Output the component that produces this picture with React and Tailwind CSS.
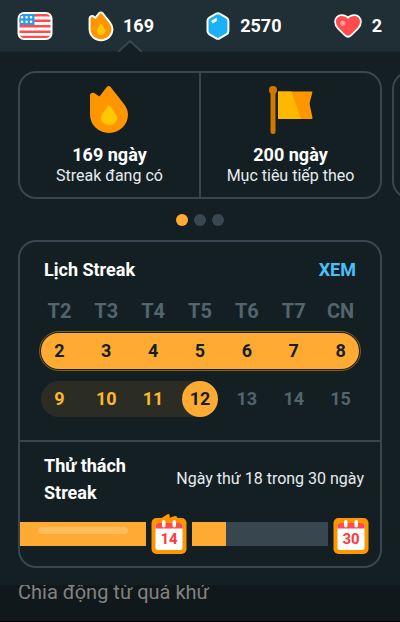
const weekdays = ["T2", "T3", "T4", "T5", "T6", "T7", "CN"];
const fullWeek = [2, 3, 4, 5, 6, 7, 8];
const currentWeek = [9, 10, 11, 12, 13, 14, 15];
const today = 12;

function UsFlag() {
  return (
    <svg className="block h-7 w-9" viewBox="0 0 36 28" role="img" aria-label="English">
      <defs>
        <clipPath id="flag">
          <rect x="2.5" y="2" width="31" height="24" rx="4.5" />
        </clipPath>
      </defs>
      <rect x="0.5" y="0" width="35" height="28" rx="6.5" fill="#fff" />
      <g clipPath="url(#flag)">
        <rect width="36" height="28" fill="#fff" />
        <path d="M0 3.3h36M0 8.7h36M0 14.2h36M0 19.7h36M0 25h36" stroke="#ff4b4b" strokeWidth="2.6" />
        <rect width="17.5" height="13" fill="#2e9be6" />
        <path
          d="M5 5.2h.1M9.5 5.2h.1M14 5.2h.1M5 9.8h.1M9.5 9.8h.1M14 9.8h.1"
          stroke="#fff"
          strokeWidth="2.5"
          strokeLinecap="round"
        />
      </g>
    </svg>
  );
}

function FlameShape({ outlined }) {
  return (
    <>
      <path
        d="M16.8 1c1-1.300 2.800-1.300 3.800 0L33 16.700c3 3.800 5 7.600 5 11.900C38 39 29.600 47 19 47S0 39 0 28.600V9.500C0 7 2 6.200 4.200 7l5.200 3.400z"
        fill="#ff9600"
        stroke={outlined ? "#fff" : "none"}
        strokeWidth="7"
        strokeLinejoin="round"
        paintOrder="stroke"
      />
      <path
        d="M17.600 20.500c.8-1.200 2-1.200 2.800 0l4.600 6.400c1.400 2 2 3.400 2 5.200 0 4-3.600 7-8 7s-8-3-8-7c0-1.800.6-3.200 2-5.200z"
        fill="#ffc800"
      />
    </>
  );
}

function Gem() {
  return (
    <svg className="block h-7 w-6" viewBox="0 0 24 28" aria-hidden="true">
      <path
        d="M10.300 2.700a3 3 0 0 1 3.200 0l6.400 3.700a3 3 0 0 1 1.500 2.600v10a3 3 0 0 1-1.500 2.600l-6.400 3.700a3 3 0 0 1-3.200 0l-6.400-3.700A3 3 0 0 1 2.500 19V9a3 3 0 0 1 1.400-2.600z"
        fill="#1cb0f6"
        stroke="#fff"
        strokeWidth="4"
        paintOrder="stroke"
      />
      <path d="M5 9l5.800-3.500v3.200a1 1 0 0 1-.5.900L6.500 11.500z" fill="#fff" opacity=".9" />
    </svg>
  );
}

function Heart() {
  return (
    <svg className="block h-6 w-7" viewBox="0 0 28 24" aria-hidden="true">
      <path
        d="M14 5C12.200 2.700 9.800 2 7.600 2 4.300 2 2 4.500 2 7.700c0 2.600 1.200 4.600 3 6.500l6.600 6.500c1.600 1.500 3.200 1.500 4.800 0l6.600-6.500c1.800-1.900 3-3.900 3-6.500C26 4.500 23.700 2 20.400 2 18.200 2 15.800 2.700 14 5z"
        fill="#ff4b4b"
        stroke="#fff"
        strokeWidth="3.600"
        paintOrder="stroke"
      />
      <circle cx="8.800" cy="9.300" r="2.600" fill="#ff9c9c" />
    </svg>
  );
}

function MilestoneFlag() {
  return (
    <svg className="block h-12 w-12" viewBox="0 0 48 48" aria-hidden="true">
      <path d="M11 5.500h33.500q1.200 0 .8 1.200l-2.500 9.300q-.3 1.500 0 3l2.700 12.800q.3 1.200-1 1.200H11z" fill="#ff9600" />
      <path d="M11 5.500h13.500L34 33H11z" fill="#ffb800" />
      <rect x="3.500" y="3" width="5" height="45" rx="2.500" fill="#d07900" />
      <circle cx="6" cy="4" r="4" fill="#d07900" />
    </svg>
  );
}

function CalendarBadge({ day, flaming }) {
  return (
    <svg className="block h-10 w-9 shrink-0" viewBox="0 0 36 40" role="img" aria-label={`Ngày ${day}`}>
      {flaming && <path d="M9 5l7-4.600q2.500-1 2.600 1l.2 2.400 5-1.800q2.500-.4 2.700 2V6H9z" fill="#ff9600" />}
      <rect x="0.500" y="4" width="35" height="36" rx="5" fill="#ff9600" />
      <rect x="4.500" y="9" width="27" height="27" rx="2.500" fill="#fff" />
      <path d="M4.500 14.500v-3a2.500 2.500 0 0 1 2.500-2.500h22a2.500 2.500 0 0 1 2.500 2.500v3z" fill="#ff4b4b" />
      <rect x="11" y="6" width="3.500" height="7.500" rx="1.750" fill="#fff" />
      <rect x="21.500" y="6" width="3.500" height="7.500" rx="1.750" fill="#fff" />
      <text x="18" y="30" textAnchor="middle" fontSize="15" fontWeight="700" fill="#ff3a3a">
        {day}
      </text>
    </svg>
  );
}

function Header() {
  return (
    <header className="flex h-[52px] items-center gap-[34px] border-b border-[#1a262b] bg-[#202f36] pr-[18px] pl-[17px] text-lg font-bold">
      <button aria-label="Khóa học">
        <UsFlag />
      </button>
      <div className="flex h-full flex-1 items-center justify-between">
        <button className="relative flex h-full items-center gap-2">
          <svg className="block h-8 w-7" viewBox="-6 -6 50 58" aria-hidden="true">
            <FlameShape outlined />
          </svg>
          169
          <svg className="absolute -bottom-px left-[31px] h-3 w-6" viewBox="0 0 24 12" aria-hidden="true">
            <path d="M0 12L12 1l12 11" fill="#141f23" stroke="#3a464e" strokeWidth="2" />
          </svg>
        </button>
        <button className="flex items-center gap-2.5">
          <Gem />
          2570
        </button>
        <button className="flex items-center gap-2.5">
          <Heart />2
        </button>
      </div>
    </header>
  );
}

function Stat({ icon, value, label }) {
  return (
    <div className="flex flex-1 flex-col items-center pt-[13px]">
      {icon}
      <p className="mt-[9px] text-lg leading-6 font-bold">{value}</p>
      <p className="text-base leading-[18px] text-[#e6ecef]">{label}</p>
    </div>
  );
}

function StreakCarousel() {
  return (
    <section className="overflow-hidden pl-[18px]">
      <div className="flex gap-2.5">
        <div className="flex h-32 w-[calc(100%-18px)] shrink-0 divide-x-2 divide-[#37464f] rounded-[18px] border-2 border-[#37464f]">
          <Stat
            icon={
              <svg className="block h-12 w-10" viewBox="0 0 40 48" aria-hidden="true">
                <FlameShape />
              </svg>
            }
            value="169 ngày"
            label="Streak đang có"
          />
          <Stat icon={<MilestoneFlag />} value="200 ngày" label="Mục tiêu tiếp theo" />
        </div>
        <div className="h-32 w-[calc(100%-18px)] shrink-0 rounded-[18px] border-2 border-[#37464f]" />
      </div>
    </section>
  );
}

function Dots() {
  return (
    <div className="mt-[15px] flex justify-center gap-1.5">
      <span className="size-3 rounded-full bg-[#ffab33]" />
      <span className="size-3 rounded-full bg-[#37464f]" />
      <span className="size-3 rounded-full bg-[#37464f]" />
    </div>
  );
}

function StreakCalendar() {
  return (
    <section className="px-4 pb-[23px]">
      <div className="flex items-center justify-between px-2 pt-4 text-lg leading-6 font-bold">
        <h2>Lịch Streak</h2>
        <button className="text-[#49c0f8]">XEM</button>
      </div>
      <div className="mt-[15px] grid grid-cols-7 text-center text-xl leading-7 font-bold text-[#52656d]">
        {weekdays.map((d) => (
          <span key={d}>{d}</span>
        ))}
      </div>
      <div className="relative mt-2 grid h-9 grid-cols-7 items-center text-center text-lg font-bold text-[#141f23]">
        <div className="absolute inset-x-[5px] inset-y-0 rounded-full bg-[#ffab33] outline outline-offset-1 outline-[#7a6412]" />
        {fullWeek.map((d) => (
          <span key={d} className="relative">
            {d}
          </span>
        ))}
      </div>
      <div className="relative mt-3 grid h-9 grid-cols-7 items-center text-center text-lg font-bold">
        <div className="absolute inset-y-0 right-1/2 left-[5px] rounded-l-full bg-[#2b2d24]" />
        {currentWeek.map((d) => (
          <span
            key={d}
            className={
              d === today
                ? "relative flex size-9 items-center justify-center justify-self-center rounded-full bg-[#ffab33] text-[#141f23]"
                : d < today
                  ? "relative text-[#ffb72b]"
                  : "relative text-[#52656d]"
            }
          >
            {d}
          </span>
        ))}
      </div>
    </section>
  );
}

function StreakChallenge() {
  return (
    <section className="border-t-2 border-[#37464f] pb-3">
      <div className="flex items-center justify-between pt-2.5 pr-4 pl-6">
        <h2 className="w-24 text-lg leading-[27px] font-bold">Thử thách Streak</h2>
        <p className="text-base text-[#e6ecef]">Ngày thứ 18 trong 30 ngày</p>
      </div>
      <div className="mt-2 flex items-end gap-[5px] pr-[11px]">
        <div className="mb-2 h-6 flex-[126] bg-[#ffab33]">
          <div className="mx-[18px] mt-[5px] h-[7px] rounded-full bg-[#ffbc5c]" />
        </div>
        <CalendarBadge day={14} flaming />
        <div className="mb-2 h-6 flex-[136] bg-[#37464f]">
          <div className="h-full w-1/4 bg-[#ffab33]" />
        </div>
        <CalendarBadge day={30} />
      </div>
    </section>
  );
}

export default function App() {
  return (
    <div className="flex min-h-screen flex-col bg-[#141f23] font-['Roboto','Liberation_Sans',sans-serif] text-white">
      <Header />
      <main className="pt-[19px] pb-[17px]">
        <StreakCarousel />
        <Dots />
        <div className="mx-[18px] mt-3.5 rounded-[18px] border-2 border-[#37464f]">
          <StreakCalendar />
          <StreakChallenge />
        </div>
      </main>
      <footer className="flex-1 overflow-hidden border-b border-black bg-[#10181c] px-[18px]">
        <p className="text-xl leading-[14px] text-[#83827f]">Chia động từ quá khứ</p>
      </footer>
    </div>
  );
}
